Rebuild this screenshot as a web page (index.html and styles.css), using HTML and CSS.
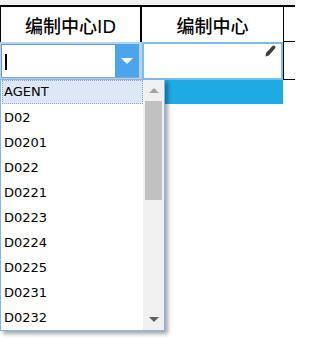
FILE: index.html
```html
<!DOCTYPE html>
<html>
<head>
<meta charset="utf-8">
<link rel="stylesheet" href="styles.css">
</head>
<body>
<div class="topbar"></div>
<div class="sheet">
  <div class="row head">
    <div class="cell c1">编制中心ID</div>
    <div class="cell c2">编制中心</div>
    <div class="cell c3"></div>
  </div>
  <div class="row edit">
    <div class="cell e1">
      <div class="input"><span class="caret"></span></div>
      <div class="dropbtn"><span class="tri-down white"></span></div>
    </div>
    <div class="cell e2">
      <svg class="pencil" width="11" height="12" viewBox="0 0 11 12"><path d="M0.5 11.5 L1.2 7.8 L7.2 1.2 Q8.6 -0.2 10 1 Q11 2.4 9.8 3.8 L3.8 10.4 Z" fill="#3c3c3c"/></svg>
    </div>
    <div class="cell e3"></div>
  </div>
  <div class="row bar">
    <div class="cell b1"></div>
    <div class="cell b2"></div>
    <div class="cell b3"></div>
  </div>
  <div class="dropdown">
    <div class="items">
      <div class="item sel">AGENT</div>
      <div class="item">D02</div>
      <div class="item">D0201</div>
      <div class="item">D022</div>
      <div class="item">D0221</div>
      <div class="item">D0223</div>
      <div class="item">D0224</div>
      <div class="item">D0225</div>
      <div class="item">D0231</div>
      <div class="item">D0232</div>
    </div>
    <div class="scroll">
      <div class="sbtn"><span class="tri-up"></span></div>
      <div class="thumb"></div>
      <div class="track"></div>
      <div class="sbtn"><span class="tri-down dark"></span></div>
    </div>
  </div>
</div>
</body>
</html>
```
FILE: styles.css
```css
html, body {
  margin: 0;
  padding: 0;
  background: #ffffff;
  width: 295px;
  height: 354px;
  overflow: hidden;
  font-family: "DejaVu Sans", "Noto Sans CJK SC", sans-serif;
}
.topbar {
  height: 5px;
  background: #f2f2f2;
}
.sheet {
  position: relative;
  border-top: 2px solid #000;
}
.row {
  display: grid;
  grid-template-columns: 142px 142px 1fr;
}
.head {
  height: 35px;
}
.head .cell {
  display: flex;
  align-items: center;
  justify-content: center;
  font-size: 18px;
  font-weight: 500;
  color: #000;
  box-sizing: border-box;
}
.head .c1 {
  border-left: 1px solid #000;
  border-right: 2px solid #000;
  padding-top: 1px;
}
.head .c2 {
  border-right: 1px solid #000;
  padding-top: 1px;
}
.head .c3 {
  border-bottom: 1px solid #000;
}
.edit {
  height: 38px;
}
.e1 {
  box-sizing: border-box;
  background: #b3d4f1;
  padding: 2px 3px 2px 1px;
  display: flex;
}
.input {
  flex: 1;
  background: #fff;
  border-top: 1px solid #6f95c0;
  border-left: 1px solid #6f95c0;
  border-bottom: 1px solid #9aa4ae;
  display: flex;
  align-items: center;
  padding-left: 3px;
}
.caret {
  width: 2px;
  height: 16px;
  background: #000;
  margin-top: 1px;
}
.dropbtn {
  width: 24px;
  background: #4ba5ec;
  border-bottom: 1px solid #9aa4ae;
  display: flex;
  align-items: center;
  justify-content: center;
}
.tri-down {
  width: 0;
  height: 0;
  border-left: 6px solid transparent;
  border-right: 6px solid transparent;
  border-top: 6px solid #fff;
}
.tri-down.white {
  border-top-color: #fff;
  margin-top: 1px;
}
.e2 {
  box-sizing: border-box;
  width: 141px;
  border: 2px solid #7cbbea;
  background: #fff;
  display: flex;
  justify-content: flex-end;
  align-items: flex-start;
  padding: 1px 5px 0 0;
}
.e3 {
  border-left: 1px solid #000;
  border-bottom: 1px solid #000;
  margin-left: -1px;
}
.bar {
  height: 24px;
}
.b2 {
  width: 141px;
  background: #1eaae3;
}
.b3 {
  border-left: 1px solid #000;
  margin-left: -1px;
  height: 0;
}
.dropdown {
  position: absolute;
  left: 0;
  top: 72px;
  width: 165px;
  height: 252px;
  box-sizing: border-box;
  border: 1px solid #88b4e8;
  background: #fff;
  display: flex;
  box-shadow: 3px 3px 4px rgba(0, 0, 0, 0.35);
}
.items {
  width: 142px;
  padding-left: 1px;
  box-sizing: border-box;
}
.item {
  box-sizing: border-box;
  height: 25px;
  line-height: 23px;
  border: 1px solid transparent;
  padding-left: 1px;
  font-size: 13px;
  color: #000;
  white-space: nowrap;
}
.item.sel {
  height: 24px;
  line-height: 22px;
  background: #dde7f6;
  border: 1px dotted #7ea6e2;
  margin-bottom: 1px;
}
.scroll {
  width: 21px;
  background: #f0f0f0;
  display: flex;
  flex-direction: column;
}
.sbtn {
  height: 21px;
  display: flex;
  align-items: center;
  justify-content: center;
}
.tri-up {
  width: 0;
  height: 0;
  border-left: 5px solid transparent;
  border-right: 5px solid transparent;
  border-bottom: 5px solid #a3a3a3;
}
.tri-down.dark {
  border-left: 5px solid transparent;
  border-right: 5px solid transparent;
  border-top: 5px solid #606060;
}
.thumb {
  height: 99px;
  margin: 0 2px;
  background: #c1c1c1;
}
.track {
  flex: 1;
}
```
